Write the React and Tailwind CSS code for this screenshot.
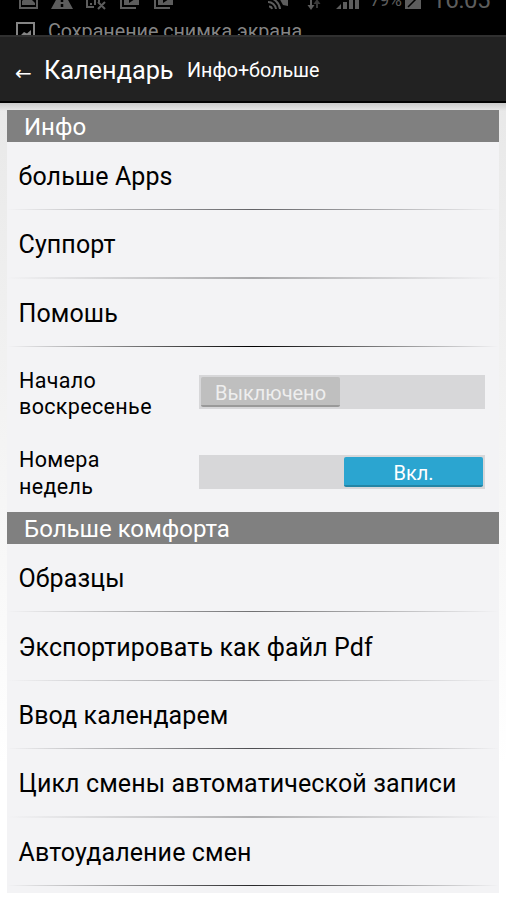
import React, { useState } from 'react';

const infoItems = [
  { label: 'больше Apps', line: 'via-[#626266]' },
  { label: 'Суппорт', line: 'h-[2px] via-[#a8a8aa]' },
  { label: 'Помошь', line: 'via-black' },
];

const moreItems = [
  { label: 'Образцы', line: 'via-[#707072]' },
  { label: 'Экспортировать как файл Pdf', line: 'via-[#8c8c90]' },
  { label: 'Ввод календарем', line: 'via-[#4c4c50]' },
  { label: 'Цикл смены автоматической записи', line: 'h-[2px] via-[#b0b0b2]' },
  { label: 'Автоудаление смен', line: 'via-[#28282a]' },
];

const StatusBar = () => (
  <div className="h-[35px] overflow-hidden bg-black text-[#5d5d5d]">
    <div className="flex h-3 items-end">
      <svg viewBox="0 0 160 12" className="ml-[17px] h-3 w-[160px] shrink-0" fill="none" stroke="currentColor" strokeWidth="2">
        <path d="M3-8H20V8H3Z" />
        <path d="M5 5V1L7-1H14L18 3V5Z" fill="currentColor" stroke="none" />
        <path d="M45-11L56 9H34Z" fill="currentColor" stroke="none" />
        <path d="M45-4V2M45 4V7" stroke="#000" strokeWidth="2.5" />
        <path d="M70-4V7H77M74 3V5M78 0V5M82-2V2M81 2L88 9M88 2L81 9" />
        <path d="M104-3V8H119" />
        <path d="M107-8H122V5H107Z" fill="currentColor" stroke="none" />
        <path d="M112-4V3L118-1Z" fill="#000" stroke="none" />
        <path d="M138-3V8H153" />
        <path d="M141-8H156V5H141Z" fill="currentColor" stroke="none" />
        <path d="M146-4V3L152-1Z" fill="#000" stroke="none" />
      </svg>
      <svg viewBox="0 0 92 12" className="ml-[91px] h-3 w-[92px] shrink-0" fill="none" stroke="currentColor" strokeWidth="2">
        <path d="M0-2A12 12 0 0 1 12 9M0 2A8 8 0 0 1 8 9M1 6.500A3 3 0 0 1 4 9" />
        <path d="M10-4H20V6L15 5Z" fill="currentColor" stroke="none" />
        <path d="M43 0V7" />
        <path d="M39.500 5H46.500L43 10Z" fill="currentColor" stroke="none" />
        <path d="M49 8V3" stroke="#393939" />
        <path d="M45.500 4H52.500L49-1Z" fill="#393939" stroke="none" />
        <path d="M68 9L73 4V9Z M75 9V2H79V9Z M81 9V-1H85V9Z M87 9V-5H91V9Z" fill="currentColor" stroke="none" />
      </svg>
      <span className="ml-[10px] w-[34px] text-[18px] leading-[24px] tracking-[-0.8px]">79%</span>
      <svg viewBox="0 0 18 12" className="h-3 w-[18px] shrink-0">
        <path d="M1-6H17V9H1Z" fill="currentColor" />
        <path d="M4 7L13-2" stroke="#000" strokeWidth="1.500" />
      </svg>
      <span className="ml-[10px] text-[24px] leading-[23px] tracking-[-0.3px]">16:05</span>
    </div>
    <div className="flex pl-4 pt-[9px] text-[#858585]">
      <svg viewBox="0 0 20 20" className="h-5 w-5 shrink-0" fill="none" stroke="currentColor" strokeWidth="2">
        <path d="M1 2H18V19H1Z" />
        <path d="M4 15L8 11L11 12.500L15 9V16H4Z" fill="currentColor" stroke="none" />
      </svg>
      <span className="ml-3 whitespace-nowrap text-[19.7px] leading-[22px]">Сохранение снимка экрана</span>
    </div>
  </div>
);

const SectionHeader = ({ title }) => (
  <h2 className="h-[31.5px] bg-[#808080] pl-[17px] text-[24px] leading-[35px] text-white">{title}</h2>
);

const MenuItem = ({ label, line }) => (
  <button type="button" className="flex h-[68.5px] w-full flex-col text-left">
    <span className="flex flex-1 items-center whitespace-nowrap pl-[11.5px] pt-[3.5px] text-[25px] tracking-[0.11px]">{label}</span>
    <span className={`min-h-px w-full bg-linear-to-r from-transparent to-transparent ${line}`} />
  </button>
);

const SwitchRow = ({ label, checked, onToggle }) => (
  <div className="flex h-[79.5px] items-center pl-3 pr-[14px]">
    <span className="w-[180px] whitespace-pre-line pt-[3.5px] text-[21.5px] leading-[26.5px] tracking-[0.35px]">{label}</span>
    <button
      type="button"
      role="switch"
      aria-checked={checked}
      onClick={onToggle}
      className={`flex h-[34px] w-[286px] bg-[#d7d7d9] p-[2px] ${checked ? 'justify-end' : 'justify-start'}`}
    >
      <span
        className={`h-[30px] w-[139px] rounded-[2px] border-b-2 text-center text-[20px] leading-[33px] ${
          checked ? 'border-[#2485a5] bg-[#2ba5d0] text-white' : 'border-[#999999] bg-[#bfbfbf] text-[#eeeeee]'
        }`}
      >
        {checked ? 'Вкл.' : 'Выключено'}
      </span>
    </button>
  </div>
);

const App = () => {
  const [sundayStart, setSundayStart] = useState(false);
  const [weekNumbers, setWeekNumbers] = useState(true);

  return (
    <div className="h-[900px] w-[506px] overflow-hidden bg-linear-to-b from-[#e5e5e5] to-[#ffffff] to-85% font-['Roboto','Noto_Sans',sans-serif] text-black">
      <StatusBar />
      <header className="flex h-[68px] items-center whitespace-nowrap border-b-2 border-t-2 border-b-black border-t-[#303030] bg-[#222222] pl-[15px] pt-[4px] text-white">
        <span className="w-[29px] pt-[3px] font-['Noto_Sans','DejaVu_Sans'] text-[20px]">←</span>
        <h1 className="w-[143px] text-[25.3px]">Календарь</h1>
        <span className="text-[19.7px]">Инфо+больше</span>
      </header>

      <div className="bg-linear-to-b from-[#c9c9c9] to-transparent to-[8px] px-[7px] pt-[7px]">
        <main className="h-[783px] bg-[#f3f3f5]">
          <SectionHeader title="Инфо" />
          {infoItems.map((item) => (
            <MenuItem key={item.label} {...item} />
          ))}
          <div className="h-[165px] pt-[5.5px]">
            <SwitchRow label={'Начало\nвоскресенье'} checked={sundayStart} onToggle={() => setSundayStart(!sundayStart)} />
            <SwitchRow label={'Номера\nнедель'} checked={weekNumbers} onToggle={() => setWeekNumbers(!weekNumbers)} />
          </div>
          <SectionHeader title="Больше комфорта" />
          {moreItems.map((item) => (
            <MenuItem key={item.label} {...item} />
          ))}
        </main>
      </div>
    </div>
  );
};

export default App;
